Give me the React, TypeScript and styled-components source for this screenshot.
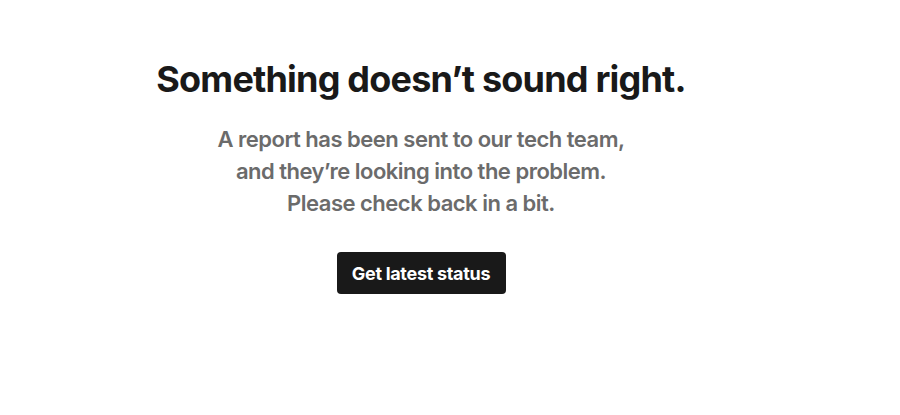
import React from 'react';
import styled, { createGlobalStyle } from 'styled-components';

const GlobalStyle = createGlobalStyle`
  html, body {
    margin: 0;
    padding: 0;
    background: #ffffff;
  }
  body {
    font-family: Inter, "Liberation Sans", sans-serif;
    -webkit-font-smoothing: antialiased;
  }
`;

const Page = styled.main`
  width: 842px;
  height: 415px;
  display: flex;
  flex-direction: column;
  align-items: center;
  padding-top: 56px;
  box-sizing: border-box;
`;

const Title = styled.h1`
  margin: 0;
  font-size: 36px;
  line-height: 46px;
  font-weight: 700;
  letter-spacing: -0.8px;
  color: #191919;
`;

const Message = styled.p`
  margin: 21px 0 0;
  font-size: 22px;
  line-height: 32px;
  font-weight: 600;
  letter-spacing: -0.5px;
  color: #6b6b6b;
  text-align: center;
`;

const StatusButton = styled.a`
  margin-top: 33px;
  display: flex;
  align-items: center;
  justify-content: center;
  width: 169px;
  height: 42px;
  border-radius: 4px;
  background: #191919;
  color: #ffffff;
  font-size: 18px;
  font-weight: 700;
  letter-spacing: -0.3px;
  text-decoration: none;
`;

export default function App() {
  return (
    <>
      <GlobalStyle />
      <Page>
        <Title>Something doesn’t sound right.</Title>
        <Message>
          A report has been sent to our tech team,
          <br />
          and they’re looking into the problem.
          <br />
          Please check back in a bit.
        </Message>
        <StatusButton href="#">Get latest status</StatusButton>
      </Page>
    </>
  );
}
